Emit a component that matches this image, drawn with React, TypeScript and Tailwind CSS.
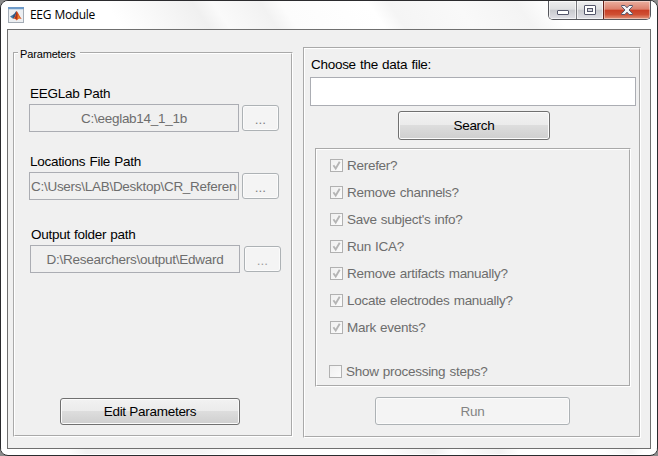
import type { ReactNode } from "react";

const steps = [
  "Rerefer?",
  "Remove channels?",
  "Save subject's info?",
  "Run ICA?",
  "Remove artifacts manually?",
  "Locate electrodes manually?",
  "Mark events?",
];

function Panel({ className, children }: { className: string; children: ReactNode }) {
  return (
    <div className={`border border-t-[#a9a9a9] border-r-white border-b-white border-l-[#a9a9a9] ${className}`}>
      <div className="h-full border border-t-white border-r-[#a9a9a9] border-b-[#a9a9a9] border-l-white">
        {children}
      </div>
    </div>
  );
}

function Button({ className, children }: { className: string; children: ReactNode }) {
  return (
    <button
      className={`block rounded-[3px] border border-[#707070] bg-[linear-gradient(#f2f2f2_0%,#ebebeb_48%,#dddddd_50%,#cfcfcf_100%)] text-center text-black shadow-[inset_0_0_0_1px_#fbfbfb] ${className}`}
    >
      {children}
    </button>
  );
}

function DisabledButton({ className, children }: { className: string; children: ReactNode }) {
  return (
    <button
      disabled
      className={`block rounded-[3px] border border-[#adb2b5] bg-[#f4f4f4] text-center text-[#838383] shadow-[inset_0_0_0_1px_#fbfbfb] ${className}`}
    >
      {children}
    </button>
  );
}

function PathField({
  label,
  value,
  className,
  gap,
  dots,
}: {
  label: string;
  value: string;
  className: string;
  gap: string;
  dots: string;
}) {
  return (
    <div className={className}>
      <div className="h-[19px] pt-px pl-px leading-[16px]">{label}</div>
      <div className={`flex items-center ${gap}`}>
        <div className="flex h-7 w-[210px] justify-center overflow-hidden border border-[#abadb3] px-px leading-[27px] text-[#6d6d6d]">
          <span className="w-full overflow-hidden text-center whitespace-nowrap">{value}</span>
        </div>
        <DisabledButton className={`h-[26px] w-[37px] leading-[28px] tracking-normal ${dots}`}>...</DisabledButton>
      </div>
    </div>
  );
}

function Check({ label, checked, className }: { label: string; checked?: boolean; className: string }) {
  return (
    <div className={`flex h-[13px] items-center gap-1 text-[#6d6d6d] ${className}`}>
      <span className="h-[13px] w-[13px] shrink-0 border border-[#b1b1b1] bg-linear-to-br from-[#f0f0f0] to-[#fbfbfb]">
        {checked && (
          <svg viewBox="0 0 11 11" className="h-[11px] w-[11px]" fill="none" stroke="#b5b5b5">
            <path d="M2.4 5.3 4.7 8.5 8.7 1.8" strokeWidth="1.9" />
          </svg>
        )}
      </span>
      <span className="leading-4 whitespace-nowrap">{label}</span>
    </div>
  );
}

function MatlabIcon() {
  return (
    <svg viewBox="0 0 16 16" className="h-4 w-4">
      <rect x=".5" y=".5" width="15" height="15" fill="#eceff2" stroke="#a4acb5" />
      <path d="M0 0h16v2H0z" fill="#6f9bc9" />
      <path d="M1 2h14v1H1z" fill="#c9dced" />
      <path d="m2 9.5 3-1.8L7 9l-2 2.7z" fill="#3f78a8" />
      <path d="M5 7.7C6.7 7 7 4.8 8.7 4L7.5 9.5 5 11.7z" fill="#315a86" />
      <path d="M8.7 4c1.5 1.5 2.6 5.4 5 8-2-1-3.1-.8-5.1 1.5C7.8 12 7 11.4 5 11.7 7.5 10.3 8 6 8.7 4z" fill="#d9531e" />
      <path d="M8.7 4c.9 2 .6 5 0 8.5C7.9 12 7.6 11.8 6.6 11.3 8.2 9.4 8.1 6 8.7 4z" fill="#a8331c" />
      <path d="M9.3 5.2c1.2 2 1 4.8.5 7 .8-.8 1.5-1 2.1-.9-1-2-1.8-4.4-2.6-6.1z" fill="#f08a2c" />
    </svg>
  );
}

function WindowButtons() {
  return (
    <div className="mr-[6px] flex h-[19px] w-[103px] overflow-hidden rounded-b-[5px] border border-t-0 border-[#55565c]">
      <div className="flex w-[27px] items-center justify-center bg-[linear-gradient(#eeeeef_0%,#dedfe1_46%,#c8c9ce_50%,#e0e0e6_100%)] shadow-[inset_0_0_0_1px_#ffffff99]">
        <svg viewBox="0 0 12 5" className="mt-[5px] h-[5px] w-3">
          <rect x=".5" y=".5" width="11" height="4" rx=".5" fill="#fff" stroke="#53556a" />
        </svg>
      </div>
      <div className="flex w-[27px] items-center justify-center border-l border-[#77787e] bg-[linear-gradient(#eeeeef_0%,#dedfe1_46%,#c8c9ce_50%,#e0e0e6_100%)] shadow-[inset_0_0_0_1px_#ffffff99]">
        <svg viewBox="0 0 12 10" className="h-[10px] w-3">
          <rect x=".5" y=".5" width="11" height="9" rx=".5" fill="#fff" stroke="#53556a" />
          <rect x="3.5" y="3.5" width="5" height="3" fill="#d4d5dc" stroke="#53556a" />
        </svg>
      </div>
      <div className="flex flex-1 items-center justify-center border-l border-[#682018] bg-[linear-gradient(#eab0a0_0%,#dc806c_46%,#c93d24_50%,#cf4f33_75%,#e4977e_100%)] shadow-[inset_0_0_0_1px_#ffffff66]">
        <svg viewBox="0 0 12 10" className="h-[10px] w-3">
          <path
            d="M.6.5h3.3L6 2.8 8.1.5h3.3v1L8 5l3.4 3.5v1H8.1L6 7.2 3.9 9.5H.6v-1L4 5 .6 1.5z"
            fill="#f5f5f7"
            stroke="#53556a"
          />
        </svg>
      </div>
    </div>
  );
}

export default function App() {
  return (
    <div className="h-[456px] w-[658px] bg-[#8a8a8a] font-['Liberation_Sans',Arial,sans-serif] text-[13.5px] tracking-[-0.28px] [word-spacing:0.7px]">
      <div className="h-full overflow-hidden rounded-[8px] border border-[#2b2b2e] bg-white">
        <header className="flex h-7 items-start justify-between bg-[linear-gradient(56deg,#fff_18%,#f0f0f0_31%,#fafafa_34%,#f2f2f2_41%,#fcfcfc_44%,#fff_57%,#f5f5f5_60%,#f9f9f9_70%,#f4f4f4_79%,#fff_84%)]">
          <div className="flex items-center gap-[6px] pt-[6px] pl-[7px]">
            <MatlabIcon />
            <span className="font-['Open_Sans','Noto_Sans',sans-serif] text-[12px] leading-4 tracking-[-0.35px] text-black">
              EEG Module
            </span>
          </div>
          <WindowButtons />
        </header>
        <main className="mx-[6px] flex h-[420px] w-[644px] gap-[10px] border border-[#6f6f6f] bg-[#f0f0f0] pl-[5px]">
          <Panel className="mt-[22px] h-[385px] w-[280px]">
            <div className="-mt-[7px] ml-[3px] w-[62px] bg-[#f0f0f0] pl-[2px] text-[11px] leading-[14px] tracking-[-0.15px] text-black">
              Parameters
            </div>
            <PathField
              className="mt-[24px] ml-[14px]"
              label="EEGLab Path"
              value="C:\eeglab14_1_1b"
              gap="gap-[3px]"
              dots="text-[#8fa3bb]"
            />
            <PathField
              className="mt-[21px] ml-[14px]"
              label="Locations File Path"
              value="C:\Users\LAB\Desktop\CR_Reference"
              gap="gap-[3px]"
              dots="text-[#8fa3bb]"
            />
            <PathField
              className="mt-[26px] ml-[15px]"
              label="Output folder path"
              value="D:\Researchers\output\Edward"
              gap="gap-1"
              dots="text-[#a0a0a0]"
            />
            <Button className="mt-[125px] ml-[45px] h-[27px] w-[180px] leading-[26px]">Edit Parameters</Button>
          </Panel>
          <Panel className="mt-[17px] h-[391px] w-[338px]">
            <div className="pt-2 pl-[6px] leading-4 text-black">Choose the data file:</div>
            <div className="mt-1 ml-[5px] h-[29px] w-[326px] border border-[#abadb3] bg-white" />
            <Button className="mt-[5px] ml-[93px] h-[29px] w-[152px] leading-[28px]">Search</Button>
            <Panel className="mt-2 ml-[10px] h-[239px] w-[316px]">
              <div className="flex flex-col gap-[14px] pt-[9px] pl-[13px]">
                {steps.map((step) => (
                  <Check key={step} label={step} checked className="" />
                ))}
              </div>
              <Check label="Show processing steps?" className="mt-[31px] ml-3" />
            </Panel>
            <DisabledButton className="mt-[10px] ml-[70px] h-7 w-[195px] leading-[27px]">Run</DisabledButton>
          </Panel>
        </main>
        <div className="h-[5px] bg-[linear-gradient(90deg,#fff_10%,#f2f2f2_13%,#f5f5f5_30%,#fff_38%,#fff_58%,#f0f0f0_66%,#fff_69%,#f2f2f2_76%,#fff_79%,#fff_92%,#f5f5f5_96%,#fff_98%)]" />
      </div>
    </div>
  );
}
